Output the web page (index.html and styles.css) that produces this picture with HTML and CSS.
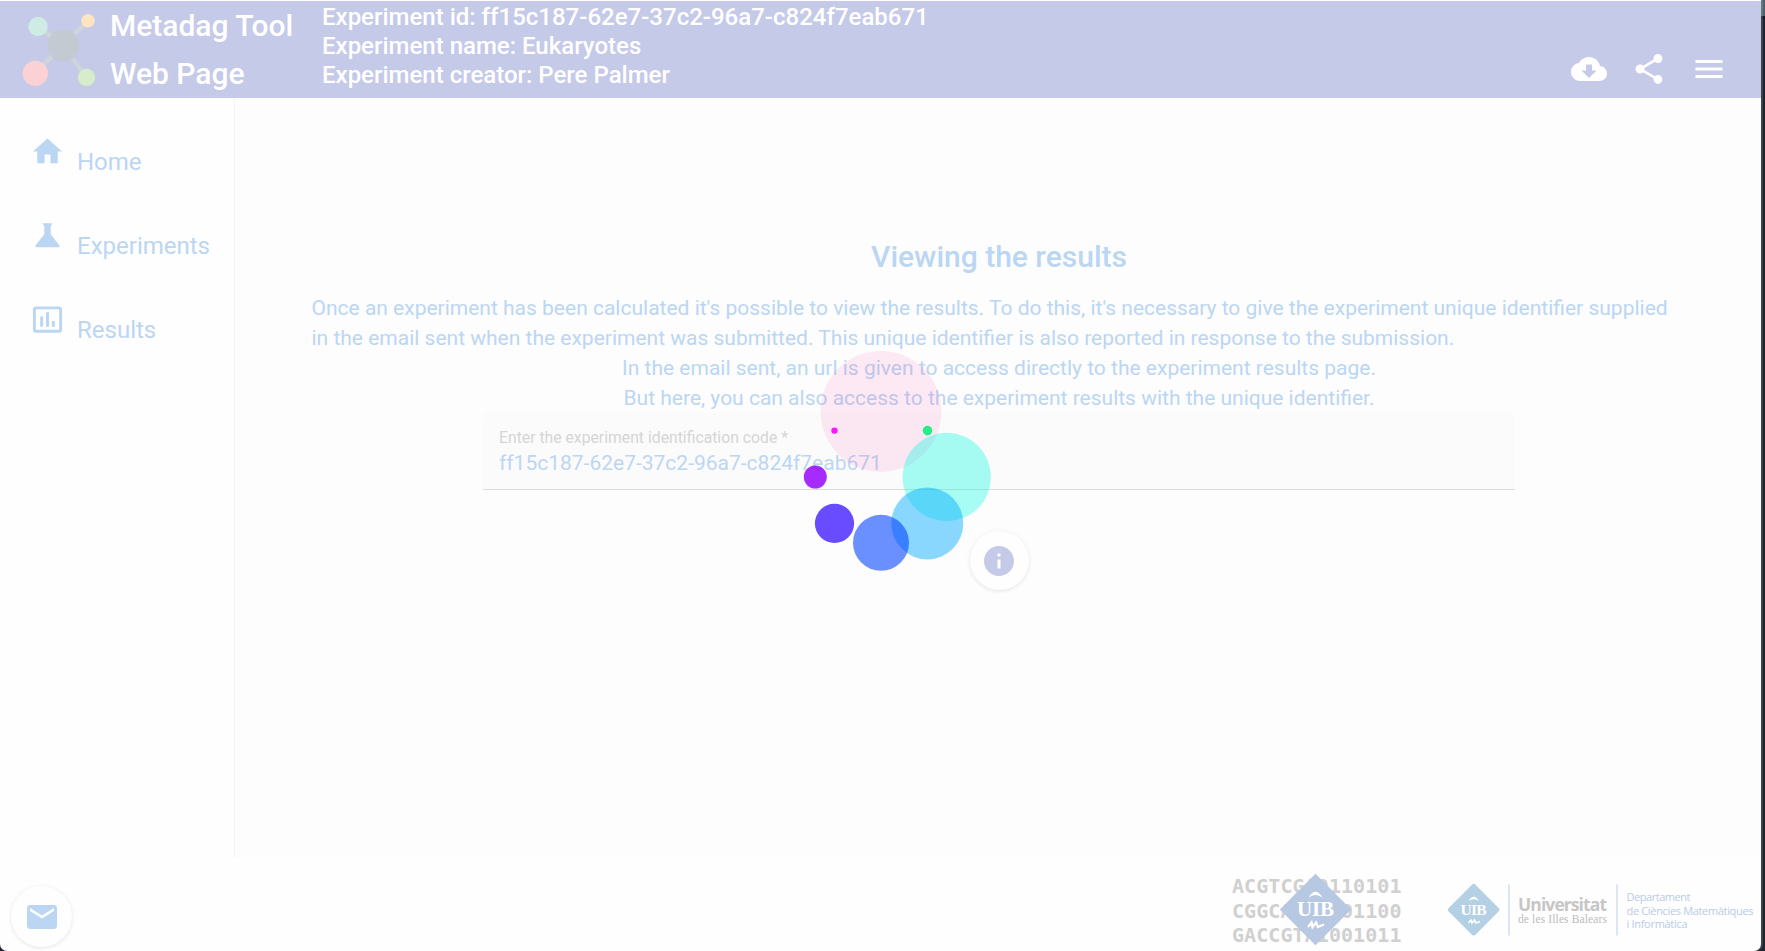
FILE: index.html
```html
<!DOCTYPE html>
<html lang="en">
<head>
<meta charset="utf-8">
<title>Metadag Tool</title>
<link rel="stylesheet" href="styles.css">
</head>
<body>
<div class="window">
  <header class="topbar">
    <svg class="brand-logo" viewBox="0 0 74 74" width="74" height="74">
      <path d="M16 13.500 41 32 66 7.500M13 60 41 32 64 64" fill="none" stroke="#d0d5dc" stroke-width="4.500"/>
      <circle cx="41.300" cy="32.500" r="16" fill="#c3cad1"/>
      <circle cx="16" cy="13.500" r="9.700" fill="#cfece4"/>
      <circle cx="66" cy="7.700" r="6.800" fill="#fde4c3"/>
      <circle cx="13.300" cy="60.300" r="12.600" fill="#fbd1d3"/>
      <circle cx="64.500" cy="64.400" r="8.600" fill="#d7edc9"/>
    </svg>
    <h1 class="brand">Metadag Tool<br>Web Page</h1>
    <div class="experiment">
      <div>Experiment id: ff15c187-62e7-37c2-96a7-c824f7eab671</div>
      <div>Experiment name: Eukaryotes</div>
      <div>Experiment creator: Pere Palmer</div>
    </div>
    <div class="actions">
      <svg class="icon" viewBox="0 0 24 24"><path d="M19.350 10.040C18.670 6.590 15.640 4 12 4 9.110 4 6.600 5.640 5.350 8.040 2.340 8.360 0 10.910 0 14c0 3.310 2.690 6 6 6h13c2.760 0 5-2.240 5-5 0-2.640-2.050-4.780-4.650-4.960zM17 13l-5 5-5-5h3V9h4v4h3z"/></svg>
      <svg class="icon" viewBox="0 0 24 24"><path d="M18 16.080c-.76 0-1.440.3-1.960.77L8.910 12.700c.05-.23.09-.46.09-.7s-.04-.47-.09-.7l7.050-4.110c.54.5 1.250.81 2.040.81 1.660 0 3-1.340 3-3s-1.340-3-3-3-3 1.340-3 3c0 .24.04.47.09.7L8.040 9.810C7.500 9.310 6.790 9 6 9c-1.660 0-3 1.340-3 3s1.340 3 3 3c.79 0 1.500-.31 2.040-.81l7.120 4.160c-.05.21-.08.43-.08.65 0 1.610 1.310 2.920 2.920 2.920s2.920-1.310 2.920-2.920-1.310-2.920-2.920-2.920z"/></svg>
      <svg class="icon" viewBox="0 0 24 24"><path d="M3 18h18v-2H3v2zm0-5h18v-2H3v2zm0-7v2h18V6H3z"/></svg>
    </div>
  </header>
  <div class="middle">
    <nav class="sidebar">
      <a class="nav-item"><svg class="nav-icon" viewBox="0 0 24 24"><path d="M10 20v-6h4v6h5v-8h3L12 3 2 12h3v8z"/></svg><span>Home</span></a>
      <a class="nav-item"><svg class="nav-icon" viewBox="0 0 24 24"><path d="M8.300 3.600h7.200L14.200 5.600v5.500l5.900 7.600q.6 1.400-.9 1.400H4.800q-1.500 0-.9-1.400l5.900-7.600V5.600z"/></svg><span>Experiments</span></a>
      <a class="nav-item"><svg class="nav-icon" viewBox="0 0 24 24"><path fill-rule="evenodd" d="M4 3h16a2 2 0 0 1 2 2v14a2 2 0 0 1-2 2H4a2 2 0 0 1-2-2V5a2 2 0 0 1 2-2zM4 5v14h16V5zM7 10h2v7H7zM11 7h2v10h-2zM15 13h2v4h-2z"/></svg><span>Results</span></a>
    </nav>
    <main class="content">
      <h2 class="heading">Viewing the results</h2>
      <p class="intro">Once an experiment has been calculated it's possible to view the results. To do this, it's necessary to give the experiment unique identifier supplied<br>in the email sent when the experiment was submitted. This unique identifier is also reported in response to the submission.</p>
      <p class="note">In the email sent, an url is given to access directly to the experiment results page.<br>But here, you can also access to the experiment results with the unique identifier.</p>
      <div class="field">
        <div class="field-label">Enter the experiment identification code *</div>
        <div class="field-value">ff15c187-62e7-37c2-96a7-c824f7eab671</div>
      </div>
      <button class="fab fab-info"><svg class="icon" viewBox="0 0 24 24"><path d="M12 2C6.480 2 2 6.480 2 12s4.480 10 10 10 10-4.480 10-10S17.520 2 12 2zm1 15h-2v-6h2v6zm0-8h-2V7h2v2z"/></svg></button>
    </main>
  </div>
  <footer class="footer">
    <button class="fab fab-mail"><svg class="icon" viewBox="0 0 24 24"><path d="M20 4H4c-1.100 0-2 .9-2 2v12c0 1.100.9 2 2 2h16c1.100 0 2-.9 2-2V6c0-1.100-.9-2-2-2zm0 4l-8 5-8-5V6l8 5 8-5v2z"/></svg></button>
    <svg class="lab-logo" viewBox="0 0 170 76" width="170" height="76">
      <g class="code">
        <text x="0" y="19.500" textLength="169.500">ACGTCGA0110101</text>
        <text x="0" y="44.500" textLength="169.500">CGGCATG0101100</text>
        <text x="0" y="69.300" textLength="169.500">GACCGTA1001011</text>
      </g>
      <path d="M83.500 .8 119.200 36.500 83.500 72.200 47.800 36.500z" fill="#b7c8e2"/>
      <text class="uib" x="65" y="42.700" font-size="21" textLength="37">UIB</text>
      <path d="M76.500 24.500Q83.500 13 90.500 24.500 83.500 19.500 76.500 24.500z" fill="#fff"/>
      <path d="M76 54l3.500-4.500 1 4.500 3.500-4.500 2 4.500 6-2.500" fill="none" stroke="#fff" stroke-width="2.300"/>
    </svg>
    <svg class="uni-logo" viewBox="0 0 308 56" width="308" height="56">
      <path d="M26.700 4.500 49.800 27.700 26.700 50.900 3.500 27.700z" fill="#b3d0e5" stroke="#b3d0e5" stroke-width="5" stroke-linejoin="round"/>
      <text class="uib" x="13.500" y="33" font-size="15.500" textLength="26">UIB</text>
      <path d="M21.500 19Q26.700 10.500 32 19 26.700 15.500 21.500 19z" fill="#fff"/>
      <path d="M21.500 41l2.500-3 1 3 2.500-3 1.500 3 4-1.500" fill="none" stroke="#fff" stroke-width="1.600"/>
      <path d="M62 2.500V53.500M170 2.500V53.500" stroke="#d3dff1" stroke-width="1.600"/>
      <text class="uni-name" x="71" y="29" textLength="89">Universitat</text>
      <text class="uni-sub" x="71" y="40.500" textLength="89">de les Illes Balears</text>
      <g class="dept">
        <text x="179.500" y="19" textLength="64">Departament</text>
        <text x="179.500" y="32.500" textLength="127">de Ciències Matemàtiques</text>
        <text x="179.500" y="45.500" textLength="61">i Informàtica</text>
      </g>
    </svg>
  </footer>
  <svg class="spinner" viewBox="-70 -130 140 250" width="140" height="250">
    <circle cx="0" cy="-65.600" r="60.500" fill="rgba(255,0,128,.08)"/>
    <circle cx="65.700" cy="0" r="44.200" fill="rgba(0,250,226,.34)"/>
    <circle cx="46.300" cy="46.400" r="36" fill="rgba(0,170,255,.46)"/>
    <circle cx="0" cy="65.800" r="28" fill="rgba(0,64,255,.58)"/>
    <circle cx="-46.500" cy="46.400" r="19.600" fill="rgba(41,0,255,.7)"/>
    <circle cx="-65.700" cy="0" r="11.500" fill="rgba(147,0,255,.83)"/>
    <circle cx="-46.500" cy="-46.400" r="3.200" fill="#ff14ff"/>
    <circle cx="46.500" cy="-46.400" r="4.800" fill="#26ed88"/>
  </svg>
</div>
</body>
</html>
```
FILE: styles.css
```css
* { box-sizing: border-box; }
body {
  margin: 0;
  height: 951px;
  overflow: hidden;
  font-family: Roboto, "Liberation Sans", sans-serif;
  background: linear-gradient(#4c616b 0 16px, #151b26 16px 19px, #20242e 19px);
}
.window {
  position: relative;
  display: flex;
  flex-direction: column;
  width: 1761px;
  height: 951px;
  padding-top: 1px;
  background: #fefefe;
  border-radius: 0 0 7px 7px;
  box-shadow: 2px 0 0 rgba(255, 255, 255, .14);
}
.topbar {
  display: flex;
  height: 97px;
  background: #c5cae9;
  color: #fff;
}
.brand-logo { margin: 12px 14px 0 22px; overflow: visible; flex: none; }
.brand {
  width: 212px;
  margin: 0;
  padding-top: 1px;
  font-size: 30px;
  font-weight: 500;
  line-height: 48px;
  white-space: nowrap;
}
.experiment {
  flex: 1;
  padding-top: 2px;
  font-size: 24px;
  font-weight: 500;
  line-height: 29px;
  white-space: nowrap;
}
.actions { display: flex; gap: 24px; padding: 50px 34px 0 0; }
.icon { display: block; width: 36px; height: 36px; fill: currentColor; }
.middle { display: flex; height: 760px; }
.sidebar {
  display: flex;
  flex-direction: column;
  width: 235px;
  padding: 36px 0 0 30px;
  border-right: 1px solid #f4f4f4;
}
.nav-item {
  display: flex;
  gap: 12px;
  height: 84px;
  color: #bbd6f3;
  font-size: 24px;
  line-height: 56px;
}
.nav-icon { width: 35px; height: 35px; fill: currentColor; }
.content {
  flex: 1;
  display: flex;
  flex-direction: column;
  align-items: center;
  padding: 139px 0 0 2px;
  background: #fdfdfd;
  color: #bbd6f3;
}
.heading { margin: 0 0 16px; font-size: 30px; font-weight: 500; line-height: 40px; }
.intro, .note { margin: 0; font-size: 21px; line-height: 30px; white-space: nowrap; }
.intro { width: 1375px; }
.note { text-align: center; }
.field {
  width: 1032px;
  height: 77px;
  margin-bottom: 41px;
  padding: 14px 16px 0;
  background: #fbfbfb;
  border-bottom: 1px solid #dcdcdc;
  border-radius: 5px 5px 0 0;
}
.field-label { color: #d5d5d5; font-size: 15.75px; line-height: 22px; }
.field-value { font-size: 21px; line-height: 28px; }
.fab {
  display: grid;
  place-items: center;
  flex: none;
  padding: 0;
  border: 0;
  border-radius: 50%;
  background: #fefefe;
  box-shadow: 0 1px 4px rgba(0, 0, 0, .1);
}
.fab-info { width: 59px; height: 59px; color: #c5cae9; }
.fab-mail { width: 61px; height: 61px; margin: 28px auto 0 11px; color: #bbd6f3; }
.footer { display: flex; height: 93px; }
.lab-logo { margin: 15px 45px 0 0; flex: none; }
.uni-logo { margin: 24px 6px 0 0; flex: none; }
.code { font: bold 20px "DejaVu Sans Mono", monospace; fill: #d0d0d0; }
.uib { font-family: "Liberation Serif", serif; font-weight: bold; fill: #fff; }
.uni-name { font: bold 17.5px "Open Sans", sans-serif; fill: #c6c6c6; }
.uni-sub { font: 11.5px "Liberation Serif", serif; fill: #bcbcbc; }
.dept { font: 11px "Open Sans", sans-serif; fill: #b9cbe8; }
.spinner { position: absolute; left: 811px; top: 347px; overflow: visible; }
```
